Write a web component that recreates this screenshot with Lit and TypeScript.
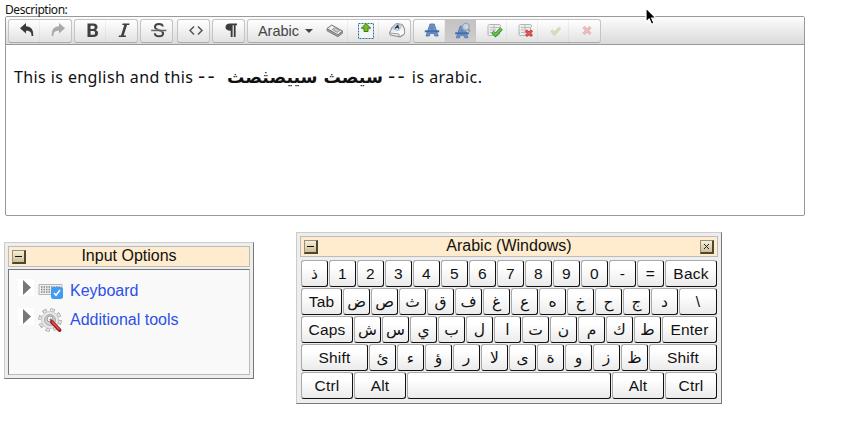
import { LitElement, html, css, svg } from "lit";
import { customElement } from "lit/decorators.js";
import { classMap } from "lit/directives/class-map.js";
import { styleMap } from "lit/directives/style-map.js";

const bigA = svg`<path fill-rule="evenodd" d="M8 3h4.200l4 12h-3.400l-.9-2.600H8.200L7.300 15H4zM9.200 8h1.700L10 5.500z" fill="#6f96cc" stroke="#4a6fa8" stroke-width=".8"/><path d="M2.800 9.300h14.400v2H2.800z" fill="#426ca9"/>`;
const sheet = svg`<path d="M5.500 3.500h10c1.300 0 1.300 3 0 3v6.500c0 1-.6 1.500-1.600 1.500h-9C3.300 14.500 3.300 12 5 12h-1V6.500C4 5 4 3.500 5.500 3.500z" fill="#eee" stroke="#b4b4b4"/><path d="M6 6.500h9M6 9h6M6 11.500h5M10 4v9" stroke="#bbb"/>`;
const tick = svg`<path d="M8.500 11l3 3 6-6.500" fill="none" stroke="#338a2c" stroke-width="3.400"/><path d="M8.800 11.100l2.700 2.700 5.700-6.100" fill="none" stroke="#66cf47" stroke-width="1.800"/>`;

const icons: Record<string, unknown> = {
  undo: svg`<path d="M3 7.200L9 2v3.200c5 .2 7.700 3.300 7.200 9.800h-1.700c.2-3.600-1.300-5.300-5.500-5.300V12.500z" fill="#3a3a3a"/>`,
  redo: svg`<path d="M17 7.200L11 2v3.200c-5 .2-7.700 3.300-7.200 9.800h1.700c-.2-3.600 1.300-5.300 5.500-5.300V12.500z" fill="#aaa"/>`,
  bold: svg`<path fill-rule="evenodd" d="M4.500 2.500h5.800c3 0 4.200 1.300 4.200 3.400 0 1.600-.8 2.500-2 3 1.600.4 2.500 1.500 2.500 3.300 0 2.500-1.700 3.800-4.700 3.800H4.500zM7.500 4.700v3.200h2.200c1.400 0 2-.5 2-1.600s-.6-1.600-2-1.600zm0 5.300v3.800h2.500c1.400 0 2.100-.6 2.100-1.900s-.7-1.900-2.100-1.900z" fill="#404040"/>`,
  italic: svg`<path d="M8.600 2.500h7l-.4 1.400H13L9.700 14.400h2.400l-.4 1.600H4.600l.4-1.500h2L10.300 4H8.200z" fill="#404040"/>`,
  strike: svg`<path d="M13.800 5.500C13.600 3.800 12.100 3 10 3 7.500 3 6 4.200 6 6c0 2 1.800 2.600 4.300 3.200 2.400.6 3.800 1.300 3.800 3.100 0 1.900-1.600 3-4 3-2.500 0-4.200-1-4.300-3" fill="none" stroke="#444" stroke-width="2"/><path d="M2 8.700h15.500v1.500H2z" fill="#444" stroke="#eee" stroke-width=".4"/>`,
  source: svg`<path d="M8 5.500L4 9.500l4 4M12 5.500l4 4-4 4" fill="none" stroke="#555" stroke-width="1.500"/>`,
  para: svg`<path d="M9 2.500h7v1.700h-1.400V16h-1.800V4.200h-1.200V16H9.700V9.800C6.300 9.800 4.500 8.300 4.500 6.200s1.600-3.700 4.500-3.700z" fill="#3c3c3c"/>`,
  eraser: svg`<path d="M2 7.500v2.300l10.800 6 4.700-3.500v-2z" fill="#999" stroke="#777" stroke-width=".8"/><path d="M2 7.500L6.700 4l10.800 6-4.700 3.800z" fill="#eee" stroke="#777"/><path d="M7.300 8.500l2.600-2 4.900 2.900-2.500 2z" fill="#c9c9c9" stroke="#888" stroke-width=".8"/>`,
  upload: svg`<path d="M2.500 2.500h15v15h-15z" fill="#f2f5f6" stroke="#336f99" stroke-dasharray="2 1"/><path d="M10 2.500l4.700 4.700H12v3.300H8V7.200H5.300z" fill="#75bd26" stroke="#427b16"/>`,
  paste: svg`<path d="M2.500 12L5 6.500l4-4 6.500 1L17.500 8v5L13.500 16 3.200 14z" fill="#eee" stroke="#888"/><path d="M5.300 7.500L9 3l6 .7-3.500 6.300z" fill="#c7d8e5" stroke="#a9b8c4" stroke-width=".8"/><path d="M8 7.500L10.800 4.500l1 3M9 6.500h2.500" fill="none" stroke="#263f59" stroke-width="1.200"/><path d="M3 12l9 1V16l5.500-3V8.500" fill="#fafafa" stroke="#888" stroke-width=".8"/>`,
  letter: bigA,
  search: svg`<g transform="translate(-.5 2.500) scale(.95)">${bigA}</g><circle cx="12.800" cy="5.800" r="3.400" fill="#cbd9ea" fill-opacity=".85" stroke="#9aa6b5" stroke-width="1.300"/><path d="M15 8l2 2.500" stroke="#999" stroke-width="2"/>`,
  accept: svg`${sheet}${tick}`,
  reject: svg`${sheet}<path d="M11 9.500l6 5.500m0-5.500l-6 5.500" stroke="#c72b35" stroke-width="2.800"/><path d="M11.500 10l5 4.500m0-4.500l-5 4.500" stroke="#f15a5a" stroke-width="1.200"/>`,
  ok: svg`<path d="M5.500 9.500l3 3.200L14 6.700" fill="none" stroke="#cbd8b4" stroke-width="3"/><path d="M5.500 9.500l3 3L14 6.700" fill="none" stroke="#dbe7c6"/>`,
  no: svg`<path d="M6.500 6l7 7m0-7l-7 7" stroke="#e5aeae" stroke-width="3"/><path d="M6.500 6l7 7m0-7l-7 7" stroke="#f4caca"/>`,
};

const groups = [
  ["undo", "redo"], ["bold", "italic"], ["strike"], ["source"], ["para"],
  ["language", "eraser", "upload", "paste"],
  ["letter", "search", "accept", "reject", "ok", "no"],
];

type Key = [string, number];
const chars = (s: string): Key[] => s.split(" ").map((c) => [c, 27]);
const rows: Key[][] = [
  [...chars("ذ 1 2 3 4 5 6 7 8 9 0 - ="), ["Back", 52]],
  [["Tab", 41], ...chars("ض ص ث ق ف غ ع ه خ ح ج د"), ["\\", 38]],
  [["Caps", 52], ...chars("ش س ي ب ل ا ت ن م ك ط"), ["Enter", 55]],
  [["Shift", 67], ...chars("ئ ء ؤ ر لا ى ة و ز ظ"), ["Shift", 68]],
  [["Ctrl", 52], ["Alt", 52], ["", 204], ["Alt", 52], ["Ctrl", 52]],
];

@customElement("rich-editor")
class RichEditor extends LitElement {
  static styles = css`
    :host { display: block; width: 800px; height: 200px; box-sizing: border-box; border: 1px solid #999; border-radius: 2px; background: #fff; }
    .bar { display: flex; height: 28px; box-sizing: border-box; border-bottom: 1px solid #999; padding: 2px; gap: 2px; background: linear-gradient(#fcfcfc, #dadada); }
    .group { display: flex; height: 24px; box-sizing: border-box; border: 1px solid #c4c4c4; border-bottom-color: #aaa; border-radius: 3px; background: linear-gradient(#fff, #e2e2e2); }
    .wide-gap { margin-right: 2px; }
    .tool { width: 31px; box-sizing: border-box; padding-left: 4px; display: flex; align-items: center; justify-content: center; }
    .tool:not(:last-child) { box-shadow: inset -1px 0 rgba(180,180,180,.17); }
    .active { background: linear-gradient(#c3c3c3, #cdcdcd); }
    svg { width: 20px; height: 20px; display: block; }
    .language { width: 69px; box-sizing: border-box; padding-left: 6px; display: flex; align-items: center; justify-content: center; gap: 6px; font: 14.500px "Liberation Sans", sans-serif; color: #444; }
    .arrow { border: 4px solid transparent; border-top-color: #444; border-bottom: 0; }
    .text { display: flex; align-items: baseline; padding: 20px 8px; font: 16px/24px "Noto Sans", "Open Sans", sans-serif; color: #111; white-space: pre; }
    .lead { width: 213px; letter-spacing: .4px; }
    .dashes { font: 20px/20px "DejaVu Sans", sans-serif; letter-spacing: 2.400px; }
    .arabic { width: 161px; font: bold 17.300px/24px "DejaVu Sans", sans-serif; direction: rtl; text-align: left; }
    .tail { letter-spacing: .45px; }
  `;
  render() {
    return html`<div class="bar">${groups.map((g) => html`<div class=${classMap({ group: true, "wide-gap": g[0] === "strike" })}>${g.map((n) => n === "language"
      ? html`<div class="language">Arabic<span class="arrow"></span></div>`
      : html`<div class=${classMap({ tool: true, active: n === "search" })}><svg viewBox="0 0 20 20">${icons[n]}</svg></div>`)}</div>`)}</div>
      <div class="text"><span class="lead">This is english and this <span class="dashes">--</span></span><span class="arabic">سيصث سييصثصث</span><span class="tail"><span class="dashes">--</span> is arabic.</span></div>`;
  }
}

@customElement("tool-panel")
class ToolPanel extends LitElement {
  static properties = { heading: {}, closable: { type: Boolean } };
  declare heading: string;
  declare closable: boolean;
  static styles = css`
    :host { display: block; box-sizing: border-box; background: #eee; border: 1px solid #ccc; border-right-color: #777; border-bottom-color: #777; padding: 3px; }
    .title { height: 21px; box-sizing: border-box; display: flex; align-items: center; justify-content: space-between; border: 1px solid #bbb; background: #ffebcd; padding: 0 3px; font: 16px/18px "Liberation Sans", sans-serif; color: #111; }
    .caption { flex: 1; text-align: center; padding-bottom: 2px; }
    .button { width: 14px; height: 14px; box-sizing: border-box; border: 1px solid #999078; border-right: 2px solid #4c4637; border-bottom: 2px solid #4c4637; background: linear-gradient(#f4efdc, #d0be8f); }
    .blank { width: 14px; }
    svg { display: block; width: 11px; height: 11px; }
  `;
  render() {
    return html`<div class="title"><div class="button"><svg viewBox="0 0 11 11"><path d="M2 5.500h7" stroke="#111"/></svg></div><span class="caption">${this.heading}</span>${this.closable
      ? html`<div class="button"><svg viewBox="0 0 11 11"><path d="M3 3l5 5m0-5l-5 5" stroke="#222"/></svg></div>` : html`<span class="blank"></span>`}</div><slot></slot>`;
  }
}

@customElement("app-root")
class AppRoot extends LitElement {
  static styles = css`
    :host { display: block; position: relative; width: 859px; height: 433px; overflow: hidden; background: #fff; font-family: "Liberation Sans", sans-serif; }
    .label { height: 16px; padding-left: 5px; font: 12px/19px "Noto Sans", "Open Sans", sans-serif; letter-spacing: -.45px; color: #111; }
    rich-editor { margin-left: 5px; }
    .panels { display: flex; align-items: flex-start; gap: 42px; padding: 16px 0 0 4px; }
    .options { width: 250px; height: 137px; margin-top: 10px; }
    .list { height: 106px; box-sizing: border-box; margin-top: 2px; padding: 6px 0 0 9px; border: 1px solid #bbb; border-top-color: #777; border-left-color: #777; background: #f9f9f9; }
    .item { display: flex; height: 29px; align-items: center; font-size: 16px; color: #2c50e8; }
    .mark { width: 16px; height: 17px; margin-top: -6px; background: #fff; }
    .mark svg, .symbol svg { display: block; }
    .symbol { width: 26px; margin: 0 6px 0 4px; }
    .keyboard { width: 426px; height: 172px; }
    .keys { display: flex; flex-direction: column; gap: 1px; padding: 3px 0 0 1px; }
    .row { display: flex; gap: 1px; }
    .key { height: 27px; box-sizing: border-box; border: 1px solid #aaa; border-right-color: #111; border-bottom-color: #111; border-radius: 3px; background: linear-gradient(#fff 25%, #ebebeb); text-align: center; color: #111; font: 15.500px/25px "Liberation Sans", "DejaVu Sans", sans-serif; letter-spacing: .2px; white-space: nowrap; }
    .letter { font: 15.500px/27px "DejaVu Sans", sans-serif; letter-spacing: 0; }
    .pointer { position: absolute; left: 642px; top: 6px; }
  `;
  render() {
    return html`<div class="label">Description:</div>
      <rich-editor></rich-editor>
      <div class="panels">
        <tool-panel class="options" .heading=${"Input Options"}>
          <div class="list">
            <div class="item">
              <span class="mark"><svg width="16" height="17"><path d="M5 1l8 7.500L5 16z" fill="#777"/></svg></span>
              <span class="symbol"><svg width="26" height="24"><path d="M1 5.500h23v10H1z" fill="#eee" stroke="#b5b5b5"/><path d="M3 8h19M3 10.500h19M3 13h19" stroke="#888" stroke-width="1.300" stroke-dasharray="1.500 1"/><rect x="13" y="8" width="12" height="12" rx="2.500" fill="#409cf2"/><path d="M16 14l2 2.300 4-5.300" fill="none" stroke="#fff" stroke-width="1.500"/></svg></span>Keyboard</div>
            <div class="item">
              <span class="mark"><svg width="16" height="17"><path d="M5 1l8 7.500L5 16z" fill="#777"/></svg></span>
              <span class="symbol"><svg width="26" height="26"><circle cx="12" cy="13" r="10" fill="none" stroke="#aaa" stroke-width="3.600" stroke-dasharray="4.300 3.554"/><circle cx="12" cy="13" r="10" fill="none" stroke="#e6e6e6" stroke-width="2" stroke-dasharray="2.800 5.054" stroke-dashoffset="-.75"/><circle cx="12" cy="13" r="8.500" fill="#e9e9e9" stroke="#ccc"/><circle cx="12" cy="13" r="5.500" fill="#d0d0d0" stroke="#aaa"/><circle cx="12" cy="12" r="3" fill="#f4f4f4" stroke="#999"/><path d="M12 12l3 3" stroke="#777" stroke-width="2"/><path d="M14 15l7.500 8" stroke="#9e2024" stroke-width="4" stroke-linecap="round"/><path d="M14 14.500l7.500 8" stroke="#e45252" stroke-width="1.500"/></svg></span>Additional tools</div>
          </div>
        </tool-panel>
        <tool-panel class="keyboard" .heading=${"Arabic (Windows)"} .closable=${true}>
          <div class="keys">${rows.map((r) => html`<div class="row">${r.map(([t, w]) => html`<div class=${classMap({ key: true, letter: /[\u0600-\u06ff]/.test(t) })} style=${styleMap({ width: `${w}px` })}>${t}</div>`)}</div>`)}</div>
        </tool-panel>
      </div>
      <svg class="pointer" width="16" height="22" viewBox="0 0 16 22"><path d="M4 2v14l3.200-3 2.300 5.200 2.500-1-2.300-5H14z" fill="#000" stroke="#fff" stroke-width="1.200"/></svg>`;
  }
}
